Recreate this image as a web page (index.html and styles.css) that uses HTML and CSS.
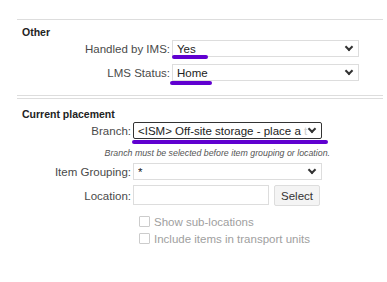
FILE: index.html
```html
<!DOCTYPE html>
<html lang="en">
<head>
    <meta charset="UTF-8" />
    <title>Placement</title>
    <link rel="stylesheet" href="styles.css">
</head>
<body>
    <div class="panel">
        <section class="group group-other">
            <h2>Other</h2>
            <div class="rows rows-wide">
                <label class="lbl">Handled by IMS:</label>
                <div class="ctl">
                    <div class="select"><span>Yes</span><i class="chev"></i></div>
                    <span class="mark mark-yes"></span>
                </div>
                <label class="lbl">LMS Status:</label>
                <div class="ctl">
                    <div class="select"><span>Home</span><i class="chev"></i></div>
                    <span class="mark mark-home"></span>
                </div>
            </div>
        </section>

        <section class="group group-placement">
            <h2>Current placement</h2>
            <div class="rows rows-narrow">
                <label class="lbl">Branch:</label>
                <div class="ctl">
                    <div class="select focused"><span>&lt;ISM&gt; Off-site storage - place a <em class="fade">t</em></span><i class="chev"></i></div>
                    <span class="mark mark-branch"></span>
                </div>
                <div class="hint">Branch must be selected before item grouping or location.</div>
                <label class="lbl row-item">Item Grouping:</label>
                <div class="ctl row-item">
                    <div class="select"><span>*</span><i class="chev"></i></div>
                </div>
                <label class="lbl row-loc">Location:</label>
                <div class="ctl row-loc">
                    <div class="input"></div>
                    <button class="btn">Select</button>
                </div>
                <div class="checks">
                    <div class="check"><i class="box"></i>Show sub-locations</div>
                    <div class="check"><i class="box"></i>Include items in transport units</div>
                </div>
            </div>
        </section>
    </div>
</body>
</html>
```

FILE: styles.css
```css
body {
    margin: 0;
    background: #fff;
    font-family: "Liberation Sans", Arial, sans-serif;
    color: #333;
}

.panel {
    margin: 0 4px 0 17px;
    padding-top: 19px;
}

.group {
    border-top: 1px solid #ddd;
    padding: 0 0 0 5px;
}

.group-other {
    border-bottom: 1px solid #ddd;
    padding-bottom: 14px;
}

.group-placement {
    margin-top: 2px;
}

h2 {
    margin: 0;
    padding: 6px 0 2px;
    font-size: 10.5px;
    line-height: 12px;
    font-weight: bold;
    color: #222;
}

.group-placement h2 {
    padding-top: 9px;
}

.rows {
    display: grid;
    align-items: center;
    column-gap: 2px;
}

.rows-wide {
    grid-template-columns: 148px 187px;
    row-gap: 7px;
}

.rows-narrow {
    grid-template-columns: 109px 189px;
}

.lbl {
    font-size: 11.5px;
    color: #4a4a4a;
    text-align: right;
}

.ctl {
    position: relative;
    display: flex;
    gap: 5px;
}

.row-item {
    margin-top: 4px;
}

.row-loc {
    margin-top: 5px;
}

.select {
    flex: 1;
    height: 15px;
    border: 1px solid #ddd;
    display: flex;
    align-items: center;
    padding: 0 6px 0 4px;
    font-size: 11.5px;
    color: #222;
    overflow: hidden;
    white-space: nowrap;
}

.select span {
    flex: 1;
    overflow: hidden;
}

.select.focused {
    border: 1px solid #333;
    border-radius: 2px;
}

.fade {
    font-style: normal;
    color: #ccc;
}

.chev {
    width: 4px;
    height: 4px;
    border-right: 2px solid #333;
    border-bottom: 2px solid #333;
    transform: rotate(45deg);
    margin-top: -3px;
    flex: none;
}

.mark {
    position: absolute;
    height: 4px;
    border-radius: 2px;
    background: #6000d0;
}

.mark-yes {
    left: 0;
    top: 15px;
    width: 36px;
}

.mark-home {
    left: -2px;
    top: 17px;
    width: 42px;
}

.mark-branch {
    left: -1px;
    top: 18px;
    width: 196px;
}

.hint {
    grid-column: 1 / 3;
    margin: 9px -8px 0 0;
    font-size: 8.8px;
    line-height: 11px;
    font-style: italic;
    color: #555;
    text-align: right;
}

.input {
    flex: 1;
    height: 18px;
    border: 1px solid #ddd;
}

.btn {
    font-family: inherit;
    font-size: 11.5px;
    color: #333;
    background: #f4f4f4;
    border: 1px solid #ddd;
    border-radius: 2px;
    padding: 0 6px;
    height: 21px;
    margin-right: 2px;
}

.checks {
    grid-column: 2;
    margin-top: 7px;
    padding-left: 6px;
    font-size: 11.5px;
    color: #a0a0a0;
}

.check {
    display: flex;
    align-items: center;
    gap: 4px;
    height: 17px;
}

.box {
    width: 9px;
    height: 9px;
    border: 1px solid #ccc;
    border-radius: 1px;
}
```
